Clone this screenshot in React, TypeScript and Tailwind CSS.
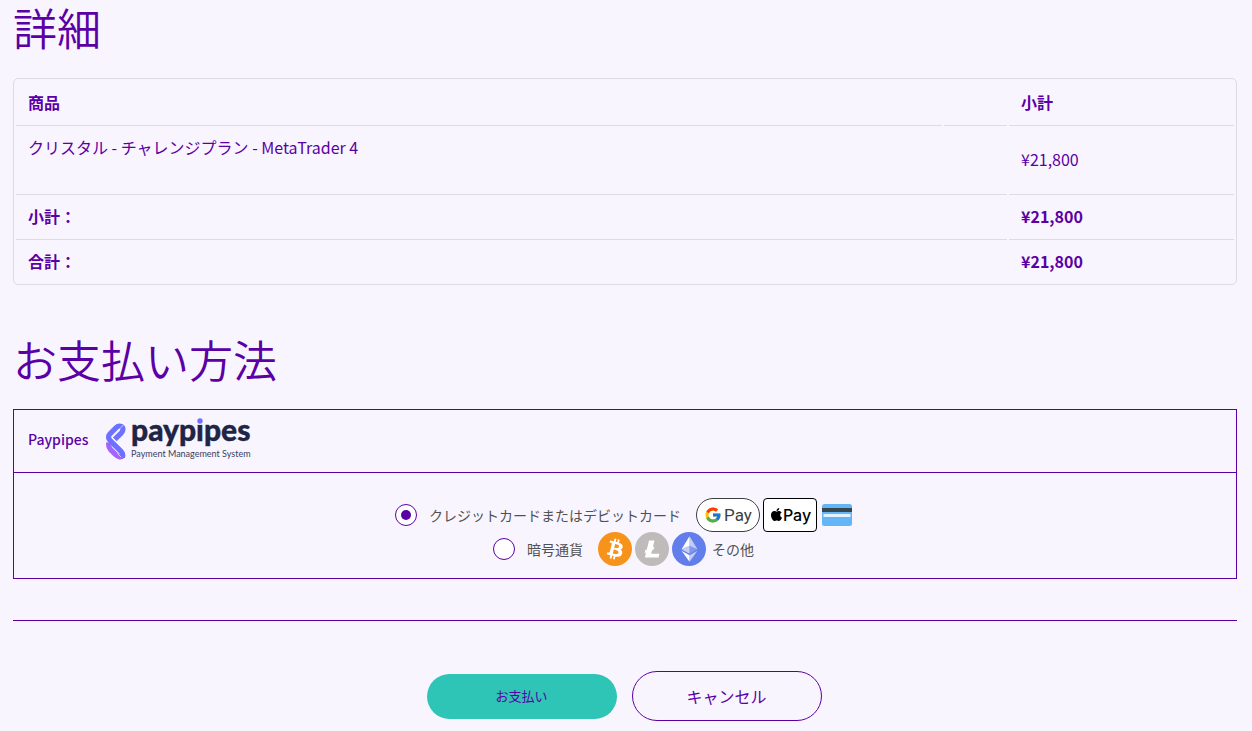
import React, { useState } from 'react';
import { FcGoogle } from 'react-icons/fc';
import { FaApple } from 'react-icons/fa';

const PaypipesLogo: React.FC = () => (
  <svg width="148" height="58" viewBox="0 -6 148 58" role="img" aria-label="Paypipes">
    <g transform="translate(0 2)" fill="none" strokeWidth="5.2" strokeLinejoin="round">
      <path d="M2.8 24.6C2.2 28 3 30 4.6 31.6L9.6 36.6C12 39.2 15 39.6 17.4 37.6" stroke="#a463fb" />
      <path
        d="M8.8 21.4L15.4 14.8C17.6 12.4 17.4 9.4 15.2 8.4C13.4 7.6 11.6 8.2 10.2 9.6L4.2 15.6C2 17.8 2 20.4 4.2 22.6L14.8 33.2C16.8 35.2 17.2 37 16.4 39"
        stroke="#6c72ff"
      />
      <path d="M12 12.4L17.6 6.8M11.4 35.4L14.8 38.8" stroke="#f8f5ff" strokeWidth="0.7" />
    </g>
    <text
      x="25"
      y="25"
      fontFamily="'Lato Black', Lato, sans-serif"
      fontSize="30"
      fontWeight="900"
      fill="#1f2544"
      stroke="#1f2544"
      strokeWidth="0.4"
    >
      paypipes
    </text>
    <circle cx="94" cy="5" r="3.8" fill="#f8f5ff" />
    <circle cx="94" cy="5" r="2.7" fill="#6c72ff" />
    <text x="25" y="41" fontFamily="Lato, sans-serif" fontSize="9" fontWeight="400" fill="#3a3f5c">
      Payment Management System
    </text>
  </svg>
);

const GooglePay: React.FC = () => (
  <span className="flex h-[34px] w-16 items-center justify-center gap-0.5 rounded-full border border-[#3c4043] bg-white">
    <FcGoogle size={18} />
    <span className="font-['Roboto',sans-serif] text-[17px] leading-5 text-[#3c4043]">Pay</span>
  </span>
);

const ApplePay: React.FC = () => (
  <span className="flex h-[34px] w-[54px] items-center justify-center rounded-sm border border-black bg-white text-black">
    <FaApple size={15} className="mb-0.5 -mr-px" />
    <span className="font-['Inter',sans-serif] text-base leading-5 font-medium">Pay</span>
  </span>
);

const CardIcon: React.FC = () => (
  <svg width="30" height="22" viewBox="0 0 30 22" className="ml-0.5">
    <rect width="30" height="22" rx="2.5" fill="#64b5f6" />
    <rect y="4" width="30" height="4" fill="#37474f" />
    <rect x="1.5" y="10" width="27" height="3" fill="#e3f2fd" />
  </svg>
);

const Bitcoin: React.FC = () => (
  <svg width="34" height="34" viewBox="0 0 32 32">
    <circle cx="16" cy="16" r="16" fill="#f7931a" />
    <path
      fill="#fff"
      fillRule="evenodd"
      d="M23.189 14.02c.314-2.096-1.283-3.223-3.465-3.975l.708-2.84-1.728-.43-.69 2.765c-.454-.114-.92-.22-1.385-.326l.695-2.783L15.596 6l-.708 2.839c-.376-.086-.746-.17-1.104-.26l.002-.009-2.384-.595-.46 1.846s1.283.294 1.256.312c.7.175.826.638.805 1.006l-.806 3.235c.048.012.11.03.18.057l-.183-.045-1.13 4.532c-.086.212-.303.531-.793.41.018.025-1.256-.313-1.256-.313l-.858 1.978 2.25.561c.418.105.828.215 1.231.318l-.715 2.872 1.727.43.708-2.84c.472.127.93.245 1.378.357l-.706 2.828 1.728.43.715-2.866c2.948.558 5.164.333 6.097-2.333.752-2.146-.037-3.385-1.588-4.192 1.13-.26 1.98-1.003 2.207-2.538zm-3.95 5.538c-.533 2.147-4.148.986-5.32.695l.95-3.805c1.172.293 4.929.872 4.37 3.11zm.535-5.569c-.487 1.953-3.495.96-4.47.717l.86-3.45c.975.243 4.118.696 3.61 2.733z"
    />
  </svg>
);

const Litecoin: React.FC = () => (
  <svg width="34" height="34" viewBox="0 0 32 32">
    <circle cx="16" cy="16" r="16" fill="#bfbbbb" />
    <path
      fill="#fff"
      d="M10.427 19.214L9 19.768l.688-2.759 1.444-.58L13.213 8h5.129l-1.519 6.196 1.41-.571-.68 2.75-1.427.571-.848 3.483H23L22.127 24H9.252z"
    />
  </svg>
);

const Ethereum: React.FC = () => (
  <svg width="34" height="34" viewBox="0 0 32 32">
    <circle cx="16" cy="16" r="16" fill="#627eea" />
    <g fill="#fff">
      <path fillOpacity=".602" d="M16.498 4v8.87l7.497 3.35z" />
      <path d="M16.498 4L9 16.22l7.498-3.35z" />
      <path fillOpacity=".602" d="M16.498 21.968v6.027L24 17.616z" />
      <path d="M16.498 27.995v-6.028L9 17.616z" />
      <path fillOpacity=".2" d="M16.498 20.573l7.497-4.353-7.497-3.348z" />
      <path fillOpacity=".602" d="M9 16.22l7.498 4.353v-7.701z" />
    </g>
  </svg>
);

interface MethodProps {
  id: string;
  label: string;
  checked: boolean;
  onSelect: (id: string) => void;
  children: React.ReactNode;
}

const PaymentMethod: React.FC<MethodProps> = ({ id, label, checked, onSelect, children }) => (
  <div className="flex items-center justify-center pr-[3px]">
    <input
      type="radio"
      id={id}
      name="payment-method"
      checked={checked}
      onChange={() => onSelect(id)}
      className="flex size-[22px] shrink-0 appearance-none items-center justify-center rounded-full border border-[#5b00a5] bg-white before:size-2.5 before:rounded-full checked:before:bg-[#5b00a5]"
    />
    <label htmlFor={id} className="ml-3 flex items-center">
      <span className="mr-[15px]">{label}</span>
      <span className="flex items-center gap-[3px]">{children}</span>
    </label>
  </div>
);

const totals = [
  { label: '小計：', value: '¥21,800' },
  { label: '合計：', value: '¥21,800' },
];

const App: React.FC = () => {
  const [method, setMethod] = useState('card');

  return (
    <main className="min-h-screen bg-[#f8f5ff] pr-[15px] pb-2.5 pl-[13px] font-['Noto_Sans_CJK_JP',sans-serif] text-base text-[#5b00a5]">
      <h1 className="text-[44px] leading-[54px] font-[350]">詳細</h1>

      <table className="mt-6 w-full table-fixed border-separate border-spacing-0.5 rounded-[5px] border border-[#dfdbe5] text-left leading-6">
        <colgroup>
          <col />
          <col className="w-[63px]" />
          <col className="w-[225px]" />
        </colgroup>
        <thead>
          <tr>
            <th className="px-3 py-[9px] font-bold">商品</th>
            <td></td>
            <th className="px-3 py-[9px] font-bold">小計</th>
          </tr>
        </thead>
        <tbody>
          <tr>
            <td className="border-t border-[#dfdbe5] px-3 pt-[9px] pb-[33px]">
              クリスタル - チャレンジプラン - MetaTrader 4
            </td>
            <td className="border-t border-[#dfdbe5]"></td>
            <td className="border-t border-[#dfdbe5] px-3 py-[9px]">¥21,800</td>
          </tr>
        </tbody>
        <tfoot>
          {totals.map((row) => (
            <tr key={row.label}>
              <th colSpan={2} className="border-t border-[#dfdbe5] px-3 py-[9px] font-bold">{row.label}</th>
              <td className="border-t border-[#dfdbe5] px-3 py-[9px] font-bold">{row.value}</td>
            </tr>
          ))}
        </tfoot>
      </table>

      <h2 className="mt-[47px] text-[44px] leading-[54px] font-[350]">お支払い方法</h2>

      <section className="mt-[23px] border border-[#5b00a5]">
        <div className="flex h-[63px] items-center gap-[18px] border-b border-[#5b00a5] px-3.5 pb-1 text-sm font-medium">
          <span>Paypipes</span>
          <PaypipesLogo />
        </div>
        <div className="pt-[25px] pb-3 text-sm text-[#515151]">
          <PaymentMethod id="card" label="クレジットカードまたはデビットカード" checked={method === 'card'} onSelect={setMethod}>
            <GooglePay />
            <ApplePay />
            <CardIcon />
          </PaymentMethod>
          <PaymentMethod id="crypto" label="暗号通貨" checked={method === 'crypto'} onSelect={setMethod}>
            <Bitcoin />
            <Litecoin />
            <Ethereum />
            <span className="ml-[3px]">その他</span>
          </PaymentMethod>
        </div>
      </section>

      <hr className="mt-[41px] border-[#5b00a5]" />

      <div className="mt-[50px] flex items-center justify-center gap-[15px] pr-0.5">
        <button type="button" className="h-[45px] w-[190px] rounded-full bg-[#2ec4b6] text-[13px]">
          お支払い
        </button>
        <button type="button" className="h-[50px] w-[190px] rounded-full border border-[#5b00a5] text-base">
          キャンセル
        </button>
      </div>
    </main>
  );
};

export default App;
